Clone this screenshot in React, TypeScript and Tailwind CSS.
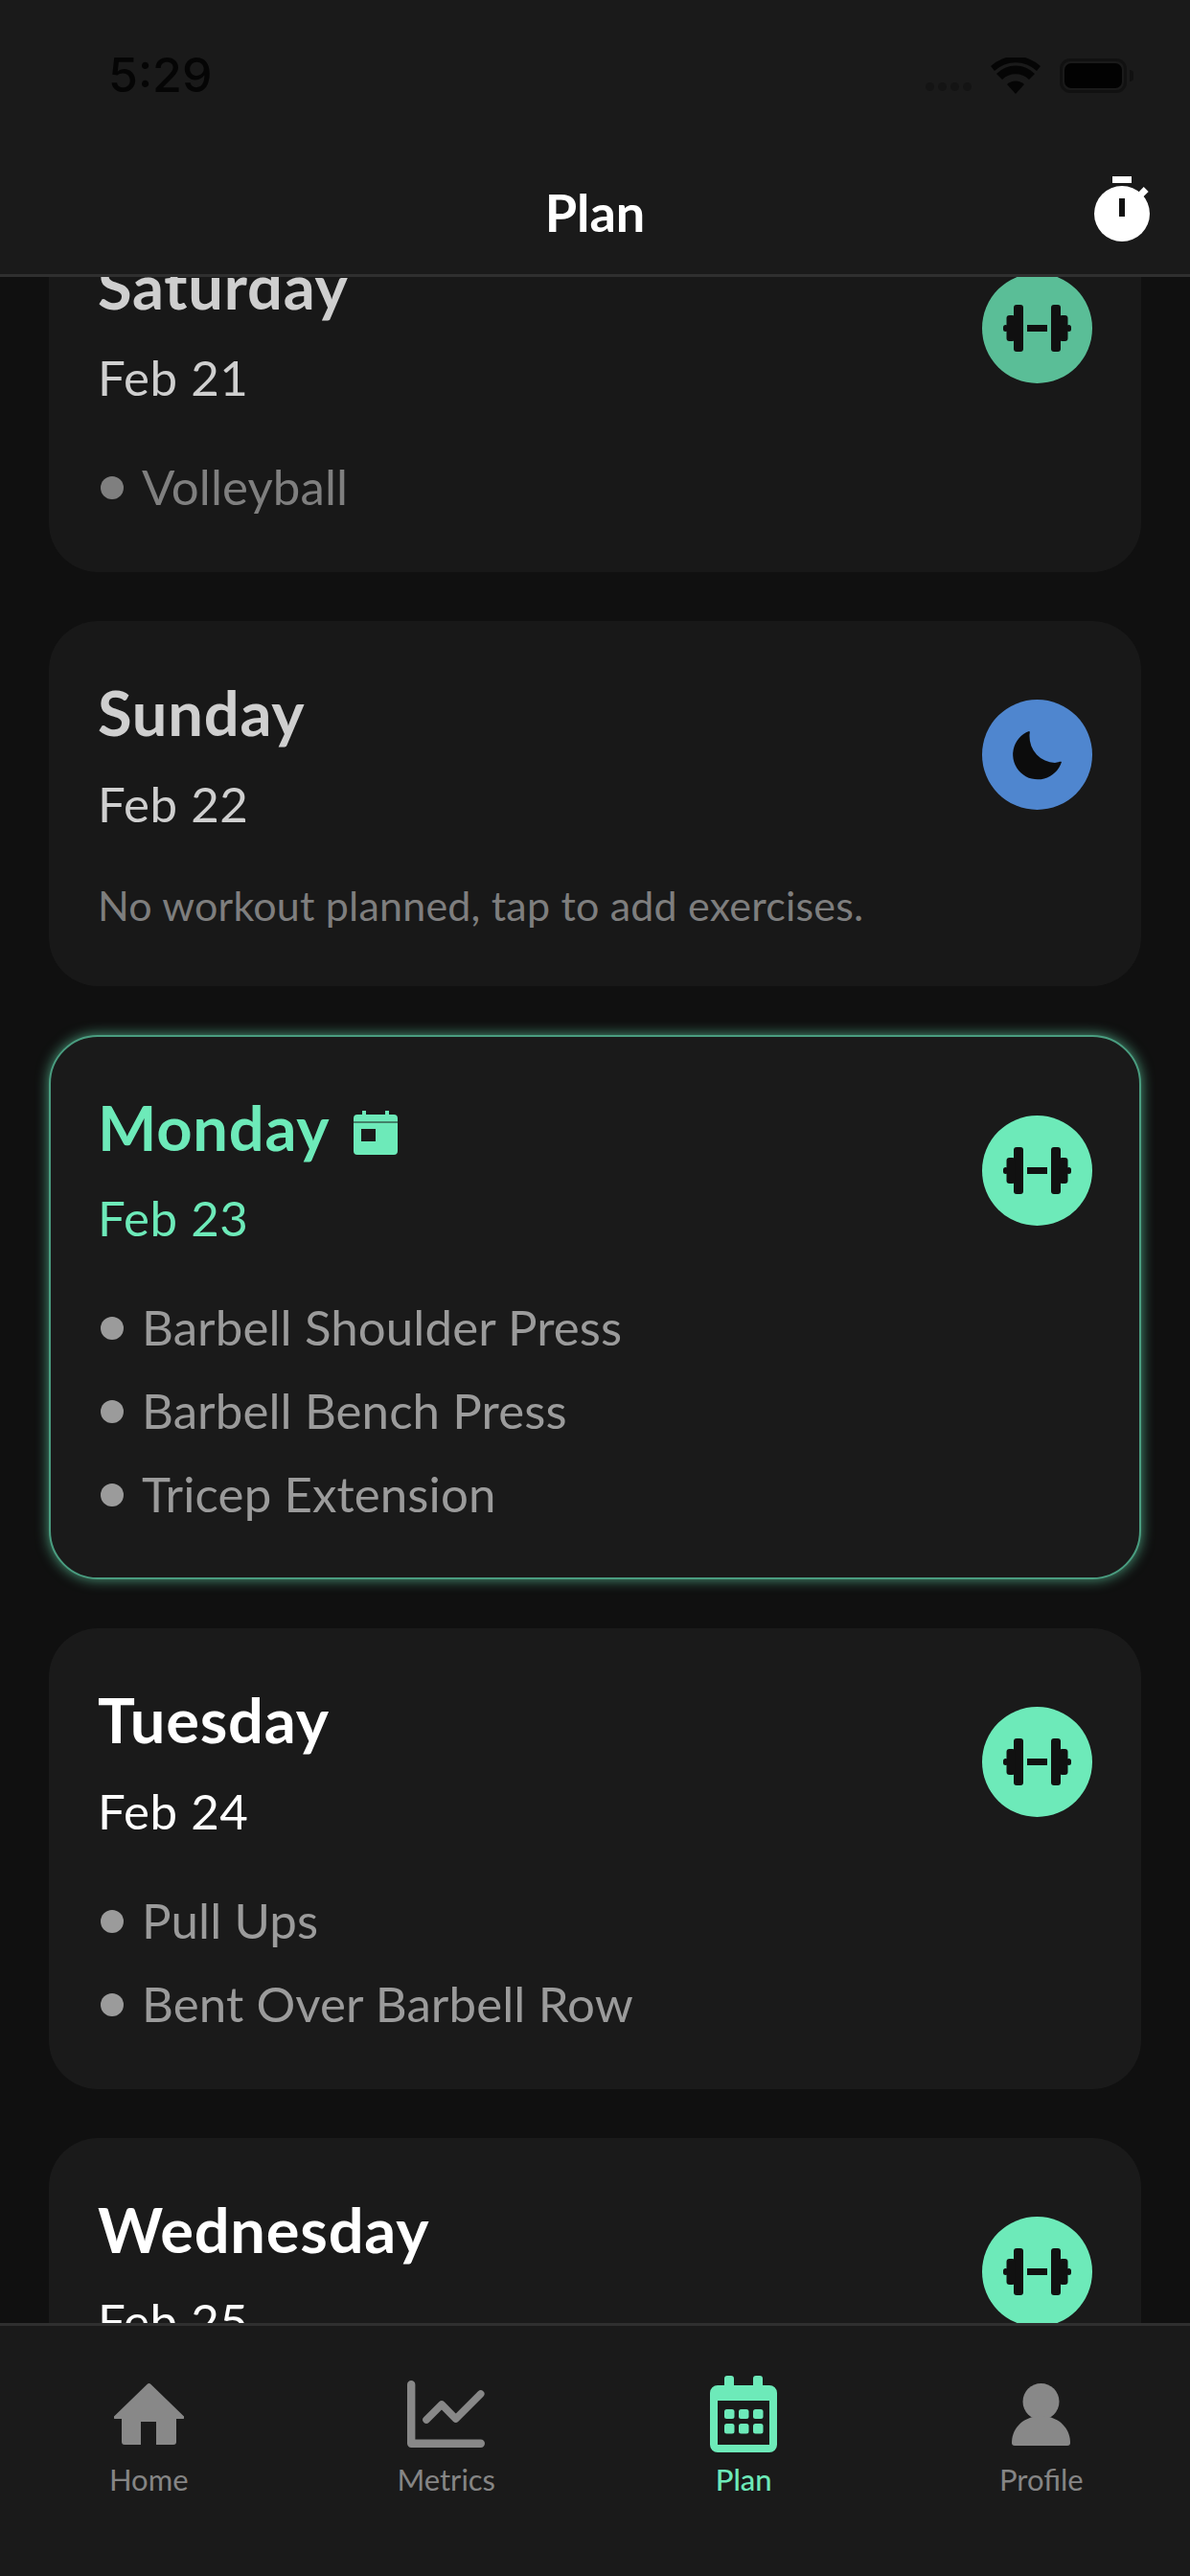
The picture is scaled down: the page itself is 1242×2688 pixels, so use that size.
import { Fragment } from 'react';

const MINT = '#6deab9';

type Day = {
  name: string;
  date: string;
  items: string[];
  note?: string;
  rest?: boolean;
  past?: boolean;
  today?: boolean;
};

const days: Day[] = [
  { name: 'Saturday', date: 'Feb 21', items: ['Volleyball'], past: true },
  { name: 'Sunday', date: 'Feb 22', items: [], note: 'No workout planned, tap to add exercises.', rest: true, past: true },
  { name: 'Monday', date: 'Feb 23', items: ['Barbell Shoulder Press', 'Barbell Bench Press', 'Tricep Extension'], today: true },
  { name: 'Tuesday', date: 'Feb 24', items: ['Pull Ups', 'Bent Over Barbell Row'] },
  { name: 'Wednesday', date: 'Feb 25', items: ['Squats'] },
];

function DumbbellBadge() {
  return (
    <div className="w-[115px] h-[115px] rounded-full bg-[#6deab9] shrink-0">
      <svg viewBox="0 0 115 115" className="w-full h-full" fill="#111111">
        <rect x="47" y="54" width="21" height="7" />
        <rect x="33" y="33" width="10" height="49" rx="3" />
        <rect x="72" y="33" width="10" height="49" rx="3" />
        <rect x="25.5" y="44" width="9" height="27" rx="3" />
        <rect x="80.5" y="44" width="9" height="27" rx="3" />
        <rect x="22" y="54" width="5" height="7" rx="2.5" />
        <rect x="88" y="54" width="5" height="7" rx="2.5" />
      </svg>
    </div>
  );
}

function MoonBadge() {
  return (
    <div className="w-[115px] h-[115px] rounded-full bg-[#5fa4ff] shrink-0">
      <svg viewBox="0 0 115 115" className="w-full h-full" fill="#0c0c0c">
        <path d="M49 33 A26 26 0 1 0 83 65 C81 64.5 80 65.5 76 66 A27.5 27.5 0 0 1 49.5 38 C49.5 35 50.5 33.5 49 33 Z" />
      </svg>
    </div>
  );
}

function DayCard({ day }: { day: Day }) {
  const wrap = day.today
    ? 'border-2 border-[#4a9d80] shadow-[0_0_14px_rgba(109,234,185,0.65)] px-[49px] pt-[49px] pb-[43px]'
    : day.past
      ? 'opacity-80 px-[51px] pt-[51px] pb-[45px]'
      : 'px-[51px] pt-[51px] pb-[45px]';
  const titleColor = day.today ? 'text-[#6deab9]' : 'text-white';

  return (
    <div className={`rounded-[51px] bg-[#1a1a1a] ${wrap}`}>
      <div className="flex justify-between">
        <div className="h-[211px]">
          <div className={`flex items-center gap-[25px] h-[90px] ${day.today ? 'pt-[2px]' : ''}`}>
            <span className={`text-[65px] font-bold tracking-[0.8px] ${titleColor}`}>{day.name}</span>
            {day.today && (
              <svg width="46" height="46" viewBox="0 0 46 46" className="mt-[10px]" fill={MINT}>
                <path d="M9 0h4v4h20V0h4v4h5a4 4 0 0 1 4 4v34a4 4 0 0 1-4 4H4a4 4 0 0 1-4-4V8a4 4 0 0 1 4-4h5z" />
                <rect x="0" y="11" width="46" height="2" fill="#1a1a1a" opacity="0.5" />
                <rect x="8" y="19" width="15" height="13" fill="#1a1a1a" />
              </svg>
            )}
          </div>
          <div className={`text-[51px] tracking-[0.5px] leading-[60px] mt-[20px] ${titleColor}`}>{day.date}</div>
        </div>
        <div className={day.today ? 'mt-[33px]' : 'mt-[31px]'}>{day.rest ? <MoonBadge /> : <DumbbellBadge />}</div>
      </div>
      {day.note && <div className="text-[43px] tracking-[0.2px] leading-[70px] mb-[4px] text-[#9a9a9a]">{day.note}</div>}
      {day.items.map((item) => (
        <div key={item} className="flex items-center gap-[19px] h-[87px] text-[51px] tracking-[0.1px] text-[#9b9b9b]">
          <span className="w-[24px] h-[24px] rounded-full bg-[#9b9b9b] shrink-0 ml-[3px]" />
          <span>{item}</span>
        </div>
      ))}
    </div>
  );
}

function HomeIcon() {
  return (
    <svg width="73" height="64" viewBox="0 0 73 64" fill="#888888">
      <path d="M34.5 1a3 3 0 0 1 4 0L72.5 34a1.6 1.6 0 0 1-1 3H65v24a3 3 0 0 1-3 3H44V40H28v24H11a3 3 0 0 1-3-3V37H1.5a1.6 1.6 0 0 1-1-3z" />
    </svg>
  );
}

function MetricsIcon() {
  return (
    <svg width="81" height="70" viewBox="0 0 81 70" fill="none" stroke="#888888" strokeLinecap="round" strokeLinejoin="round">
      <path d="M4.2 4.2v61.6h72.6" strokeWidth="8.4" />
      <path d="M20 41 36 25l14.7 15L76.7 14" strokeWidth="7.6" />
    </svg>
  );
}

function PlanIcon() {
  return (
    <svg width="70" height="80" viewBox="0 0 70 80" fill={MINT}>
      <path d="M15 3a3 3 0 0 1 3-3h4a3 3 0 0 1 3 3v7h20V3a3 3 0 0 1 3-3h4a3 3 0 0 1 3 3v7h7a8 8 0 0 1 8 8v54a8 8 0 0 1-8 8H8a8 8 0 0 1-8-8V18a8 8 0 0 1 8-8h7z" />
      <rect x="8" y="26" width="54" height="46" fill="#1a1a1a" />
      {[15, 30, 45].map((x) => (
        <Fragment key={x}>
          <rect x={x} y="35" width="10.5" height="10" rx="2.5" />
          <rect x={x} y="50" width="10.5" height="10.5" rx="2.5" />
        </Fragment>
      ))}
    </svg>
  );
}

function ProfileIcon() {
  return (
    <svg width="61" height="65" viewBox="0 0 61 65" fill="#888888">
      <circle cx="30.5" cy="19" r="19" />
      <path d="M3 65a3 3 0 0 1-3-3C0 46 13 34 30.5 34S61 46 61 62a3 3 0 0 1-3 3z" />
    </svg>
  );
}

function StatusBar() {
  return (
    <div className="h-[156px] flex items-start justify-between pl-[113px] pr-[59px] pt-[46px]">
      <span className="text-[50px] leading-[64px] font-medium text-[#050505] font-['Inter',sans-serif]">5:29</span>
      <div className="flex items-center gap-[20px] mt-[14px]">
        <div className="flex items-end gap-[4px] h-[36px] pb-[2px]">
          {[0, 1, 2, 3].map((i) => (
            <span key={i} className="w-[9px] h-[9px] rounded-full bg-[#141414]" />
          ))}
        </div>
        <svg width="52" height="38" viewBox="0 0 52 38" fill="#050505">
          <path d="M26 38 17 28a13 13 0 0 1 18 0z" />
          <path d="M12 23 6 17a28 28 0 0 1 40 0l-6 6a20 20 0 0 0-28 0z" />
          <path d="M4 14 0 9a38 38 0 0 1 52 0l-4 5a32 32 0 0 0-44 0z" />
        </svg>
        <div className="flex items-center gap-[3px]">
          <div className="w-[70px] h-[36px] rounded-[11px] border-[3px] border-[#111111] p-[2px]">
            <div className="w-full h-full rounded-[7px] bg-[#020202]" />
          </div>
          <span className="w-[4px] h-[12px] rounded-r-full bg-[#111111]" />
        </div>
      </div>
    </div>
  );
}

export default function App() {
  return (
    <div className="w-[1242px] h-[2688px] flex flex-col bg-[#101010] overflow-hidden font-['Lato',sans-serif]">
      <header className="relative z-10 h-[289px] shrink-0 bg-[#1a1a1a] border-b-[3px] border-[#2f2f2f]">
        <StatusBar />
        <div className="grid grid-cols-3 items-center h-[130px] px-[42px]">
          <div />
          <div className="text-center text-[54px] font-bold text-white">Plan</div>
          <div className="flex justify-end mb-[6px]">
            <svg width="58" height="68" viewBox="0 0 58 68" fill="#ffffff">
              <rect x="19" y="0" width="20" height="7" />
              <circle cx="29" cy="39" r="29" />
              <rect x="48" y="12" width="7" height="9" transform="rotate(45 51 16)" />
              <rect x="26" y="23" width="6" height="19" fill="#111111" />
            </svg>
          </div>
        </div>
      </header>

      <main className="flex-1 overflow-hidden px-[51px]">
        <div className="flex flex-col gap-[51px] -mt-[86px]">
          {days.map((day) => (
            <DayCard key={day.name} day={day} />
          ))}
        </div>
      </main>

      <nav className="relative z-10 h-[264px] shrink-0 bg-[#1a1a1a] border-t-[3px] border-[#2f2f2f] grid grid-cols-4">
        {[
          { label: 'Home', icon: <HomeIcon /> },
          { label: 'Metrics', icon: <MetricsIcon /> },
          { label: 'Plan', icon: <PlanIcon />, active: true },
          { label: 'Profile', icon: <ProfileIcon /> },
        ].map((tab) => (
          <div key={tab.label} className="flex flex-col items-center pt-[52px]">
            <div className="h-[80px] flex items-center justify-center">{tab.icon}</div>
            <span className={`mt-[5px] text-[31px] ${tab.active ? 'text-[#6deab9] font-medium' : 'text-[#858585]'}`}>{tab.label}</span>
          </div>
        ))}
      </nav>
    </div>
  );
}
